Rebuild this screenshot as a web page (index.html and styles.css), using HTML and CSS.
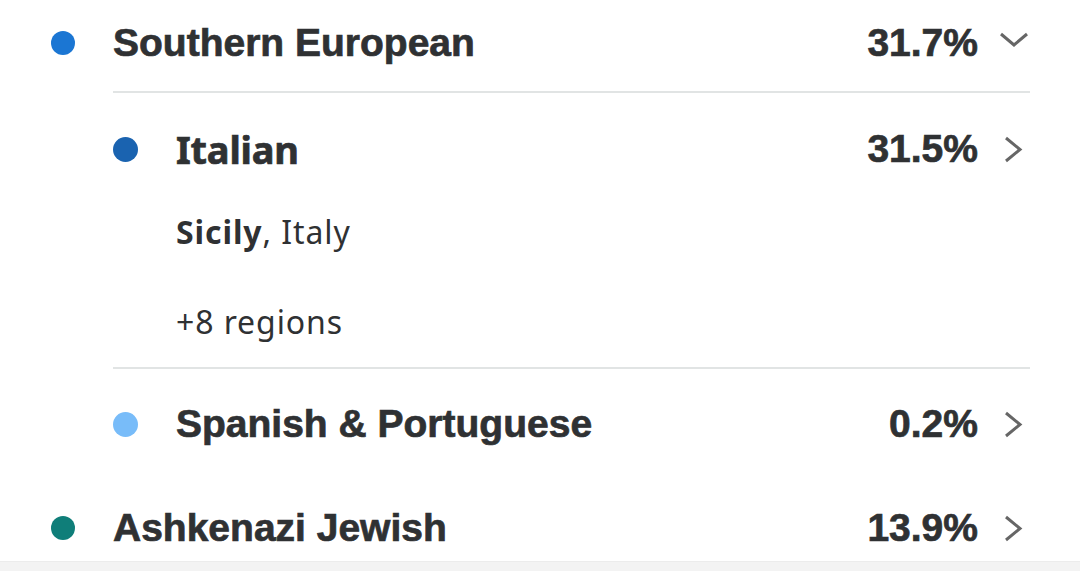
FILE: index.html
```html
<!DOCTYPE html>
<html>
<head>
<meta charset="utf-8">
<link rel="stylesheet" href="styles.css">
</head>
<body>
<div class="list">
  <div class="row top">
    <span class="dot" style="background:#1b76d3"></span>
    <span class="name">Southern European</span>
    <span class="pct">31.7%</span>
    <svg class="chev" viewBox="0 0 52 30" width="52" height="30"><polyline points="23,6 36,17 49,6" /></svg>
  </div>
  <div class="sub">
    <div class="row subrow italian">
      <span class="dot" style="background:#1a63b0"></span>
      <span class="name alt">Italian</span>
      <span class="pct">31.5%</span>
      <svg class="chev" viewBox="0 0 52 30" width="52" height="30"><polyline points="28,4 42,15.5 28,27" /></svg>
    </div>
    <div class="detail">
      <div class="line"><b>Sicily</b>, Italy</div>
      <div class="line more">+8 regions</div>
    </div>
    <div class="row subrow spanish">
      <span class="dot" style="background:#78bcf9"></span>
      <span class="name">Spanish &amp; Portuguese</span>
      <span class="pct">0.2%</span>
      <svg class="chev" viewBox="0 0 52 30" width="52" height="30"><polyline points="28,4 42,15.5 28,27" /></svg>
    </div>
  </div>
  <div class="row top last">
    <span class="dot" style="background:#0f7e79"></span>
    <span class="name">Ashkenazi Jewish</span>
    <span class="pct">13.9%</span>
    <svg class="chev" viewBox="0 0 52 30" width="52" height="30"><polyline points="28,4 42,15.5 28,27" /></svg>
  </div>
</div>
<div class="footer"></div>
</body>
</html>
```

FILE: styles.css
```css
html, body {
  margin: 0;
  padding: 0;
  background: #ffffff;
}
body {
  width: 1080px;
  height: 571px;
  overflow: hidden;
  position: relative;
  color: #2f3133;
  font-family: "Liberation Sans", Arial, sans-serif;
}
.list {
  padding: 0 50px 0 51px;
}
.row {
  display: flex;
  align-items: center;
}
.row.top {
  height: 86px;
}
.row.last {
  height: 98px;
}
.dot {
  width: 24px;
  height: 24px;
  border-radius: 50%;
  flex: none;
  margin-right: 38px;
}
.name {
  font-size: 39px;
  font-weight: bold;
  flex: 1;
  letter-spacing: 0;
  -webkit-text-stroke: 0.7px #2f3133;
}
.name.alt {
  font-family: "Noto Sans", sans-serif;
  font-size: 38px;
  letter-spacing: -0.2px;
}
.pct {
  font-size: 39px;
  font-weight: bold;
  -webkit-text-stroke: 0.7px #2f3133;
}
.chev {
  flex: none;
  fill: none;
  stroke: #666666;
  stroke-width: 3;
  stroke-linecap: butt;
  stroke-linejoin: miter;
}
.sub {
  margin-left: 62px;
  margin-top: 5px;
  border-top: 2px solid #e1e4e4;
}
.subrow .dot {
  width: 25px;
  height: 25px;
  margin-right: 38px;
}
.italian {
  height: 112px;
}
.detail {
  padding-left: 63px;
  font-family: "Noto Sans", sans-serif;
  font-size: 32px;
  letter-spacing: 0.9px;
  border-bottom: 2px solid #e1e4e4;
  padding-bottom: 18px;
}
.detail .line {
  height: 54px;
  line-height: 54px;
}
.detail .more {
  margin-top: 36px;
}
.spanish {
  height: 110px;
}
.footer {
  position: absolute;
  left: 0;
  right: 0;
  bottom: 0;
  height: 9px;
  background: #f3f3f3;
  border-top: 1px solid #ececec;
}
```
